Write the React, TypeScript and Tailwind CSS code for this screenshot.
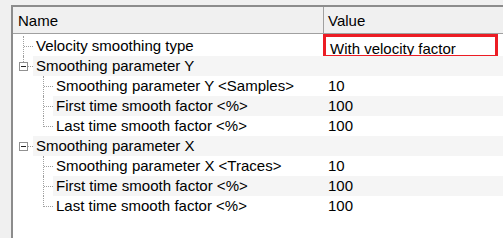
type Row = {
  label: string;
  value: string;
  level: 0 | 1;
  kind: "leaf" | "group";
  // tree line flags
  lineAbove?: boolean;
  last?: boolean;
  shaded?: boolean;
  editing?: boolean;
};

const rows: Row[] = [
  { label: "Velocity smoothing type", value: "With velocity factor", level: 0, kind: "leaf", editing: true },
  { label: "Smoothing parameter Y", value: "", level: 0, kind: "group", lineAbove: true, shaded: true },
  { label: "Smoothing parameter Y <Samples>", value: "10", level: 1, kind: "leaf" },
  { label: "First time smooth factor <%>", value: "100", level: 1, kind: "leaf", shaded: true },
  { label: "Last time smooth factor <%>", value: "100", level: 1, kind: "leaf", last: true },
  { label: "Smoothing parameter X", value: "", level: 0, kind: "group", shaded: true },
  { label: "Smoothing parameter X <Traces>", value: "10", level: 1, kind: "leaf" },
  { label: "First time smooth factor <%>", value: "100", level: 1, kind: "leaf", shaded: true },
  { label: "Last time smooth factor <%>", value: "100", level: 1, kind: "leaf", last: true },
];

function ExpandBox() {
  return (
    <div className="absolute left-[6px] top-[6px] w-[9px] h-[9px] border border-[#919191] bg-white flex items-center justify-center">
      <div className="w-[5px] h-px bg-[#222]" />
    </div>
  );
}

function Gutter({ row }: { row: Row }) {
  if (row.level === 0) {
    return (
      <div className="relative w-[20px] h-full shrink-0">
        {row.kind === "group" ? (
          <>
            {row.lineAbove && <div className="absolute left-[10px] top-0 h-[6px] border-l border-dotted border-[#a0a0a0]" />}
            <ExpandBox />
            <div className="absolute left-[15px] top-[10px] w-[5px] border-t border-dotted border-[#a0a0a0]" />
          </>
        ) : (
          <>
            <div className="absolute left-[10px] top-0 h-full border-l border-dotted border-[#a0a0a0]" />
            <div className="absolute left-[11px] top-[10px] w-[9px] border-t border-dotted border-[#a0a0a0]" />
          </>
        )}
      </div>
    );
  }
  return (
    <>
      <div className="w-[20px] h-full shrink-0" />
      <div className="relative w-[20px] h-full shrink-0">
        <div
          className={
            "absolute left-[10px] top-0 border-l border-dotted border-[#a0a0a0] " +
            (row.last ? "h-[11px]" : "h-full")
          }
        />
        <div className="absolute left-[11px] top-[10px] w-[9px] border-t border-dotted border-[#a0a0a0]" />
      </div>
    </>
  );
}

export default function App() {
  return (
    <div
      className="w-[503px] h-[238px] bg-[#f0f0f0] overflow-hidden text-[15px] text-black"
      style={{ fontFamily: '"Liberation Sans", Arial, sans-serif' }}
    >
      <div className="ml-[11px] mt-[5px] h-[233px] border-l-2 border-t-2 border-[#8c8c8c] bg-white flex flex-col">
        {/* header */}
        <div className="h-[27px] flex bg-[#f0f0f0] border-b border-[#a0a0a0] shrink-0">
          <div className="w-[311px] pl-[5px] flex items-center border-r border-[#a0a0a0] leading-none">Name</div>
          <div className="flex-1 pl-[4px] flex items-center leading-none">Value</div>
        </div>

        {/* rows */}
        <div className="pt-[2px] flex flex-col">
          {rows.map((row, i) => (
            <div key={i} className="relative h-[20px] flex">
              <div className="w-[311px] h-full flex shrink-0">
                <Gutter row={row} />
                <div
                  className={
                    "flex-1 h-full pl-[3px] flex items-center whitespace-nowrap " +
                    (row.shaded ? "bg-[#f5f5f5]" : "")
                  }
                >
                  {row.label}
                </div>
              </div>
              <div
                className={
                  "flex-1 h-full pl-[4px] flex items-center whitespace-nowrap " +
                  (row.shaded ? "bg-[#f5f5f5]" : "")
                }
              >
                {row.editing ? "" : row.value}
              </div>
              {row.editing && (
                <div className="absolute left-[310px] top-[-2px] w-[175px] h-[24px] border-[3px] border-[#ec1c24] bg-white pl-[4px] flex items-center overflow-hidden whitespace-nowrap">
                  <span className="relative top-[3px]">{row.value}</span>
                </div>
              )}
            </div>
          ))}
        </div>
      </div>
    </div>
  );
}
